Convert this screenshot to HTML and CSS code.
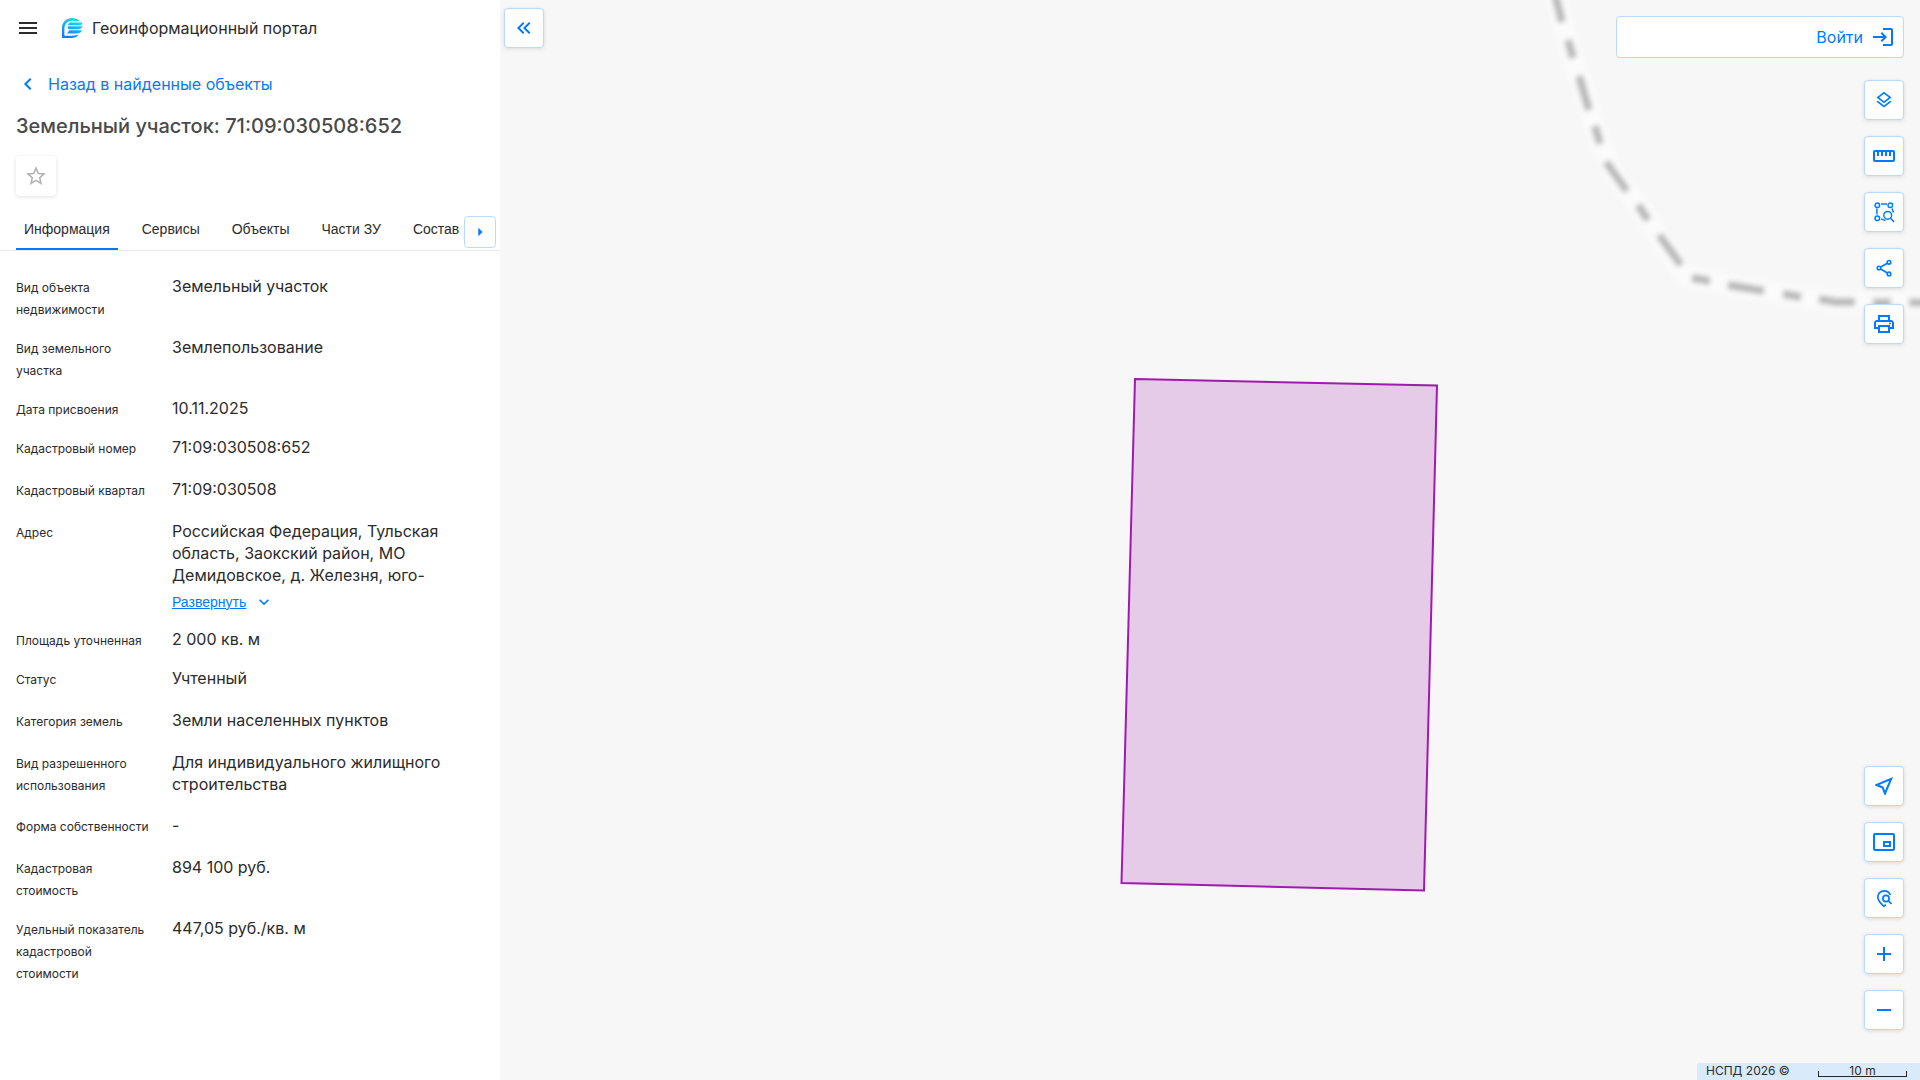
FILE: index.html
```html
<!DOCTYPE html>
<html lang="ru">
<head>
<meta charset="utf-8">
<meta name="viewport" content="width=device-width, initial-scale=1">
<title>Геоинформационный портал</title>
<link rel="stylesheet" href="styles.css">
</head>
<body>
<div class="app">
  <aside class="panel">
    <header class="header">
      <button class="icon-button" type="button" aria-label="Меню">
        <svg class="icon" viewBox="0 0 24 24"><path d="M3 18h18v-2H3v2zm0-5h18v-2H3v2zm0-7v2h18V6H3z"/></svg>
      </button>
      <svg class="logo" viewBox="0 0 22 22" aria-hidden="true">
        <defs>
          <linearGradient id="logo-fill" x1="0.8" y1="0" x2="0.3" y2="1">
            <stop offset="0" stop-color="#1fe8d0"/>
            <stop offset="0.45" stop-color="#14b8f5"/>
            <stop offset="1" stop-color="#1677ff"/>
          </linearGradient>
        </defs>
        <path fill="url(#logo-fill)" d="M1 21V11C1 5 5.500 1 11 1C14 1 16.500 2 18.500 3.800C17 4.300 15 4.200 12.500 3.900C7 3.300 3.400 7 3.400 11.500V18.700H11C13.500 18.700 16 18.200 17.800 17.800C16 20 13.500 21 10.500 21Z M9 5.400H21.500C21 7.600 19.500 8.300 17.500 8.300H7C7.200 7 8 6 9 5.400Z M6.800 9.300H21.300C20.800 11.600 19.300 12.300 17.300 12.300H8.500C7.200 12.300 6.300 11 6.800 9.300Z M8 13.300H20.800C20 15.600 18.500 16.500 16 16.500H6C6.800 15.800 7.500 14.500 8 13.300Z"/>
      </svg>
      <span class="brand">Геоинформационный портал</span>
    </header>

    <a class="back" href="#results">
      <svg class="icon" viewBox="0 0 24 24"><path d="M15.410 7.410L14 6l-6 6 6 6 1.410-1.410L10.830 12z"/></svg>
      <span>Назад в найденные объекты</span>
    </a>

    <h1 class="title">Земельный участок: 71:09:030508:652</h1>

    <button class="favourite" type="button" aria-label="В избранное">
      <svg class="icon" viewBox="0 0 24 24"><path d="M12 15.390L8.240 17.660L9.230 13.380L5.910 10.500L10.290 10.130L12 6.090L13.710 10.130L18.090 10.500L14.770 13.380L15.760 17.660M22 9.240L14.810 8.630L12 2L9.190 8.630L2 9.240L7.450 13.970L5.820 21L12 17.270L18.180 21L16.540 13.970L22 9.240Z"/></svg>
    </button>

    <nav class="tabs">
      <div class="tab-list" role="tablist">
        <button class="tab tab--active" type="button" role="tab" aria-selected="true">Информация</button>
        <button class="tab" type="button" role="tab">Сервисы</button>
        <button class="tab" type="button" role="tab">Объекты</button>
        <button class="tab" type="button" role="tab">Части ЗУ</button>
        <button class="tab" type="button" role="tab">Состав</button>
      </div>
      <button class="tab-next" type="button" aria-label="Следующие вкладки">
        <svg class="icon icon--small" viewBox="0 0 24 24"><path d="M10 17L15 12L10 7V17Z"/></svg>
      </button>
    </nav>

    <dl class="details">
      <div class="row"><dt>Вид объекта недвижимости</dt><dd>Земельный участок</dd></div>
      <div class="row"><dt>Вид земельного участка</dt><dd>Землепользование</dd></div>
      <div class="row"><dt>Дата присвоения</dt><dd>10.11.2025</dd></div>
      <div class="row row--tall"><dt>Кадастровый номер</dt><dd>71:09:030508:652</dd></div>
      <div class="row row--tall"><dt>Кадастровый квартал</dt><dd>71:09:030508</dd></div>
      <div class="row">
        <dt>Адрес</dt>
        <dd>
          Российская Федерация, Тульская область, Заокский район, МО Демидовское, д. Железня, юго-
          <button class="expand" type="button">
            <span class="expand-text">Развернуть</span>
            <svg class="icon icon--small" viewBox="0 0 24 24"><path d="M7.410 8.590L12 13.170l4.590-4.580L18 10l-6 6-6-6z"/></svg>
          </button>
        </dd>
      </div>
      <div class="row"><dt>Площадь уточненная</dt><dd>2 000 кв. м</dd></div>
      <div class="row row--tall"><dt>Статус</dt><dd>Учтенный</dd></div>
      <div class="row row--tall"><dt>Категория земель</dt><dd>Земли населенных пунктов</dd></div>
      <div class="row row--tall-double"><dt>Вид разрешенного использования</dt><dd>Для индивидуального жилищного строительства</dd></div>
      <div class="row row--tall"><dt>Форма собственности</dt><dd>-</dd></div>
      <div class="row"><dt>Кадастровая стоимость</dt><dd>894 100 руб.</dd></div>
      <div class="row"><dt>Удельный показатель кадастровой стоимости</dt><dd>447,05 руб./кв. м</dd></div>
    </dl>
  </aside>

  <main class="map">
    <svg class="map-canvas" viewBox="500 0 1420 1080" preserveAspectRatio="xMidYMid slice" aria-hidden="true">
      <defs>
        <filter id="soften" filterUnits="userSpaceOnUse" x="1500" y="-40" width="460" height="400"><feGaussianBlur stdDeviation="2.5"/></filter>
      </defs>
      <g fill="none" filter="url(#soften)">
        <path stroke="#fbfbfb" stroke-width="20" stroke-linejoin="round" d="M1554 -10L1570 50L1584 92L1598 137L1616 177L1643 212L1684 276L1746 288L1836 302H1930"/>
        <path stroke="#b8b8b8" stroke-width="8" d="M1554 -10L1562 22M1568 40L1573 58M1579 76L1589 110M1595 126L1600 144M1606 162L1627 191M1638 205L1648 220M1659 235L1681 265M1692 278L1710 281M1728 285L1764 291M1783 294L1801 297M1819 299L1836 302H1855M1873 302.500H1891M1909 302.500H1930"/>
      </g>
      <path fill="#e6cbe8" stroke="#a01ab0" stroke-width="2" d="M1135 379L1437 385.500L1424 890.500L1121.500 883Z"/>
    </svg>

    <button class="tool tool--collapse" type="button" aria-label="Свернуть панель">
      <svg class="icon" viewBox="0 0 24 24"><path d="M18.410 7.410L17 6L11 12L17 18L18.410 16.590L13.830 12L18.410 7.410M12.410 7.410L11 6L5 12L11 18L12.410 16.590L7.830 12L12.410 7.410Z"/></svg>
    </button>

    <div class="controls">
      <button class="login" type="button">
        <span>Войти</span>
        <svg class="icon" viewBox="0 0 24 24"><path d="M11 7 9.600 8.400l2.600 2.600H2v2h10.200l-2.600 2.600L11 17l5-5-5-5zm9 12h-8v2h8c1.100 0 2-.9 2-2V5c0-1.100-.9-2-2-2h-8v2h8v14z"/></svg>
      </button>
      <div class="tools">
        <button class="tool" type="button" aria-label="Слои">
          <svg class="icon icon--small" viewBox="0 0 24 24"><path d="M11.990 18.540l-7.370-5.730L3 14.070l9 7 9-7-1.630-1.270zM12 16l7.360-5.730L21 9l-9-7-9 7 1.630 1.270L12 16zm0-11.470L17.740 9 12 13.470 6.260 9 12 4.530z"/></svg>
        </button>
        <button class="tool" type="button" aria-label="Измерения">
          <svg class="icon" viewBox="0 0 24 24"><path d="M21 6H3c-1.100 0-2 .9-2 2v8c0 1.100.9 2 2 2h18c1.100 0 2-.9 2-2V8c0-1.100-.9-2-2-2zm0 10H3V8h2v4h2V8h2v4h2V8h2v4h2V8h2v4h2V8h2v8z"/></svg>
        </button>
        <button class="tool" type="button" aria-label="Поиск по области">
          <svg class="icon icon--line" viewBox="0 0 24 24"><g stroke-width="1.500"><circle cx="5.300" cy="5.300" r="2.300"/><circle cx="18.300" cy="5.300" r="2.300"/><circle cx="5.300" cy="18.300" r="2.300"/><circle cx="15.700" cy="15.300" r="3.900"/><path d="M18.600 18.200L22 22M9 3.900H15M4.900 8.500V14.500M9 18.900L13.500 20.600M20 8.500L21.500 12.500"/></g></svg>
        </button>
        <button class="tool" type="button" aria-label="Поделиться">
          <svg class="icon icon--line" viewBox="0 0 24 24"><g stroke-width="1.600"><circle cx="7" cy="12" r="1.800"/><circle cx="17" cy="6.300" r="1.800"/><circle cx="17" cy="17.900" r="1.800"/><path d="M8.600 11L15.400 7.200M8.600 13L15.400 17"/></g></svg>
        </button>
        <button class="tool" type="button" aria-label="Печать">
          <svg class="icon" viewBox="0 0 24 24"><path d="M19 8h-1V3H6v5H5c-1.660 0-3 1.340-3 3v6h4v4h12v-4h4v-6c0-1.660-1.340-3-3-3zM8 5h8v3H8V5zm8 12v2H8v-4h8v2zm2-2v-2H6v2H4v-4c0-.55.45-1 1-1h14c.55 0 1 .45 1 1v4h-2z"/><circle cx="18" cy="11.500" r="1"/></svg>
        </button>
      </div>
      <div class="tools tools--bottom">
        <button class="tool" type="button" aria-label="Моё местоположение">
          <svg class="icon" viewBox="0 0 24 24"><path d="M17.270 6.730l-4.240 10.130-1.320-3.420-.32-.83-.82-.32-3.430-1.330 10.130-4.230M21 3L3 10.530v.98l6.840 2.650L12.480 21h.98L21 3z"/></svg>
        </button>
        <button class="tool" type="button" aria-label="Обзорная карта">
          <svg class="icon icon--line" viewBox="0 0 24 24"><g stroke-width="2"><rect x="2" y="4" width="20" height="16" rx="1"/><rect x="12" y="12" width="6" height="4"/></g></svg>
        </button>
        <button class="tool" type="button" aria-label="Поиск в точке">
          <svg class="icon icon--line" viewBox="0 0 24 24"><g stroke-width="1.700"><path d="M18.300 9C17.400 6.400 15.200 4.800 12.300 4.800C8.500 4.800 5.800 7.500 5.800 11C5.800 14.300 8 17 12 20.300L13.900 18.600"/><circle cx="14" cy="12.500" r="3.100"/><path d="M16.200 14.700L19.600 18"/></g></svg>
        </button>
        <button class="tool" type="button" aria-label="Приблизить">
          <svg class="icon" viewBox="0 0 24 24"><path d="M19 13h-6v6h-2v-6H5v-2h6V5h2v6h6v2z"/></svg>
        </button>
        <button class="tool" type="button" aria-label="Отдалить">
          <svg class="icon" viewBox="0 0 24 24"><path d="M19 13H5v-2h14v2z"/></svg>
        </button>
      </div>
    </div>

    <footer class="map-footer">
      <span>НСПД 2026 ©</span>
      <span class="scale">10 m</span>
    </footer>
  </main>
</div>
</body>
</html>
```
FILE: styles.css
```css
* {
  box-sizing: border-box;
}

body {
  margin: 0;
  font-family: Inter, "Liberation Sans", sans-serif;
  font-size: 16px;
  line-height: 22px;
  color: #2b2b2b;
}

button {
  margin: 0;
  padding: 0;
  border: 0;
  background: none;
  font: inherit;
  color: inherit;
  cursor: pointer;
}

.app {
  display: flex;
  min-height: 100vh;
}

.icon {
  display: block;
  flex: none;
  width: 24px;
  height: 24px;
  fill: currentColor;
}

.icon--small {
  width: 20px;
  height: 20px;
}

.icon--line {
  fill: none;
  stroke: currentColor;
}

/* Object panel */

.panel {
  flex: 0 0 500px;
  background: #fff;
}

.header {
  display: flex;
  align-items: center;
  height: 56px;
  padding: 0 16px;
}

.icon-button {
  margin-right: 20px;
}

.logo {
  width: 24px;
  height: 22px;
  margin-right: 8px;
}

.back {
  display: flex;
  align-items: center;
  gap: 8px;
  height: 56px;
  padding: 0 16px;
  color: #007bff;
  text-decoration: none;
}

.title {
  margin: 0 16px;
  font-size: 20px;
  font-weight: 500;
  line-height: 28px;
  color: #4a4a4a;
}

.favourite {
  display: flex;
  align-items: center;
  justify-content: center;
  width: 40px;
  height: 40px;
  margin: 16px 16px 20px;
  border-radius: 4px;
  color: #b3b3b3;
  box-shadow: 0 1px 4px rgba(0, 0, 0, 0.12);
}

.tabs {
  display: flex;
  align-items: flex-start;
  gap: 4px;
  height: 35px;
  padding: 0 4px 0 16px;
  border-bottom: 1px solid #ebebeb;
}

.tab-list {
  display: flex;
  flex: 1;
  gap: 16px;
  overflow: hidden;
}

.tab {
  flex: none;
  height: 34px;
  padding: 0 8px 6px;
  border-bottom: 2px solid transparent;
  font-family: "Liberation Sans", Arial, sans-serif;
  font-size: 14px;
}

.tab--active {
  border-bottom-color: #007bff;
}

.tab-next {
  display: flex;
  align-items: center;
  justify-content: center;
  width: 32px;
  height: 32px;
  border: 1px solid #b8daff;
  border-radius: 4px;
  color: #007bff;
}

.details {
  display: flex;
  flex-direction: column;
  gap: 15px;
  margin: 0;
  padding: 24px 48px 24px 16px;
}

.row {
  display: grid;
  grid-template-columns: 136px 1fr;
  column-gap: 20px;
}

.row--tall {
  min-height: 27px;
}

.row--tall-double {
  min-height: 48px;
}

.row dt {
  padding-top: 2px;
  font-size: 12px;
}

.row dd {
  margin: 0;
}

.expand {
  display: flex;
  align-items: center;
  gap: 8px;
  margin-top: 5px;
  color: #007bff;
}

.expand-text {
  font-family: "Liberation Sans", Arial, sans-serif;
  font-size: 14px;
  text-decoration: underline;
}

/* Map */

.map {
  position: relative;
  flex: 1;
  display: flex;
  overflow: hidden;
  background: #f7f7f7;
}

.map-canvas {
  position: absolute;
  inset: 0;
  width: 100%;
  height: 100%;
}

.controls {
  position: relative;
  display: flex;
  flex: 1;
  flex-direction: column;
  align-items: flex-end;
  padding: 16px 16px 50px;
}

.login {
  display: flex;
  align-items: center;
  justify-content: flex-end;
  gap: 8px;
  width: 288px;
  height: 42px;
  margin-bottom: 22px;
  padding-right: 8px;
  border: 1px solid #b8daff;
  border-radius: 4px;
  background: #fff;
  color: #007bff;
}

.tools {
  display: flex;
  flex-direction: column;
  gap: 16px;
}

.tools--bottom {
  margin-top: auto;
}

.tool {
  display: flex;
  align-items: center;
  justify-content: center;
  width: 40px;
  height: 40px;
  border: 1px solid #b8daff;
  border-radius: 4px;
  background: #fff;
  color: #007bff;
  box-shadow: 0 1px 4px rgba(0, 0, 0, 0.12);
}

.tool--collapse {
  position: relative;
  margin: 8px 0 0 4px;
}

.map-footer {
  position: absolute;
  right: 0;
  bottom: 0;
  display: flex;
  align-items: flex-start;
  justify-content: space-between;
  width: 223px;
  height: 17px;
  padding: 0 13px 0 9px;
  background: #d9ebfa;
  font-size: 12px;
  line-height: 16px;
}

.scale {
  display: flex;
  justify-content: center;
  width: 89px;
  height: 14px;
  background:
    linear-gradient(#262626, #262626) left bottom / 1px 6px no-repeat,
    linear-gradient(#262626, #262626) right bottom / 1px 6px no-repeat,
    linear-gradient(#262626, #262626) left bottom / 100% 1px no-repeat;
}
```
